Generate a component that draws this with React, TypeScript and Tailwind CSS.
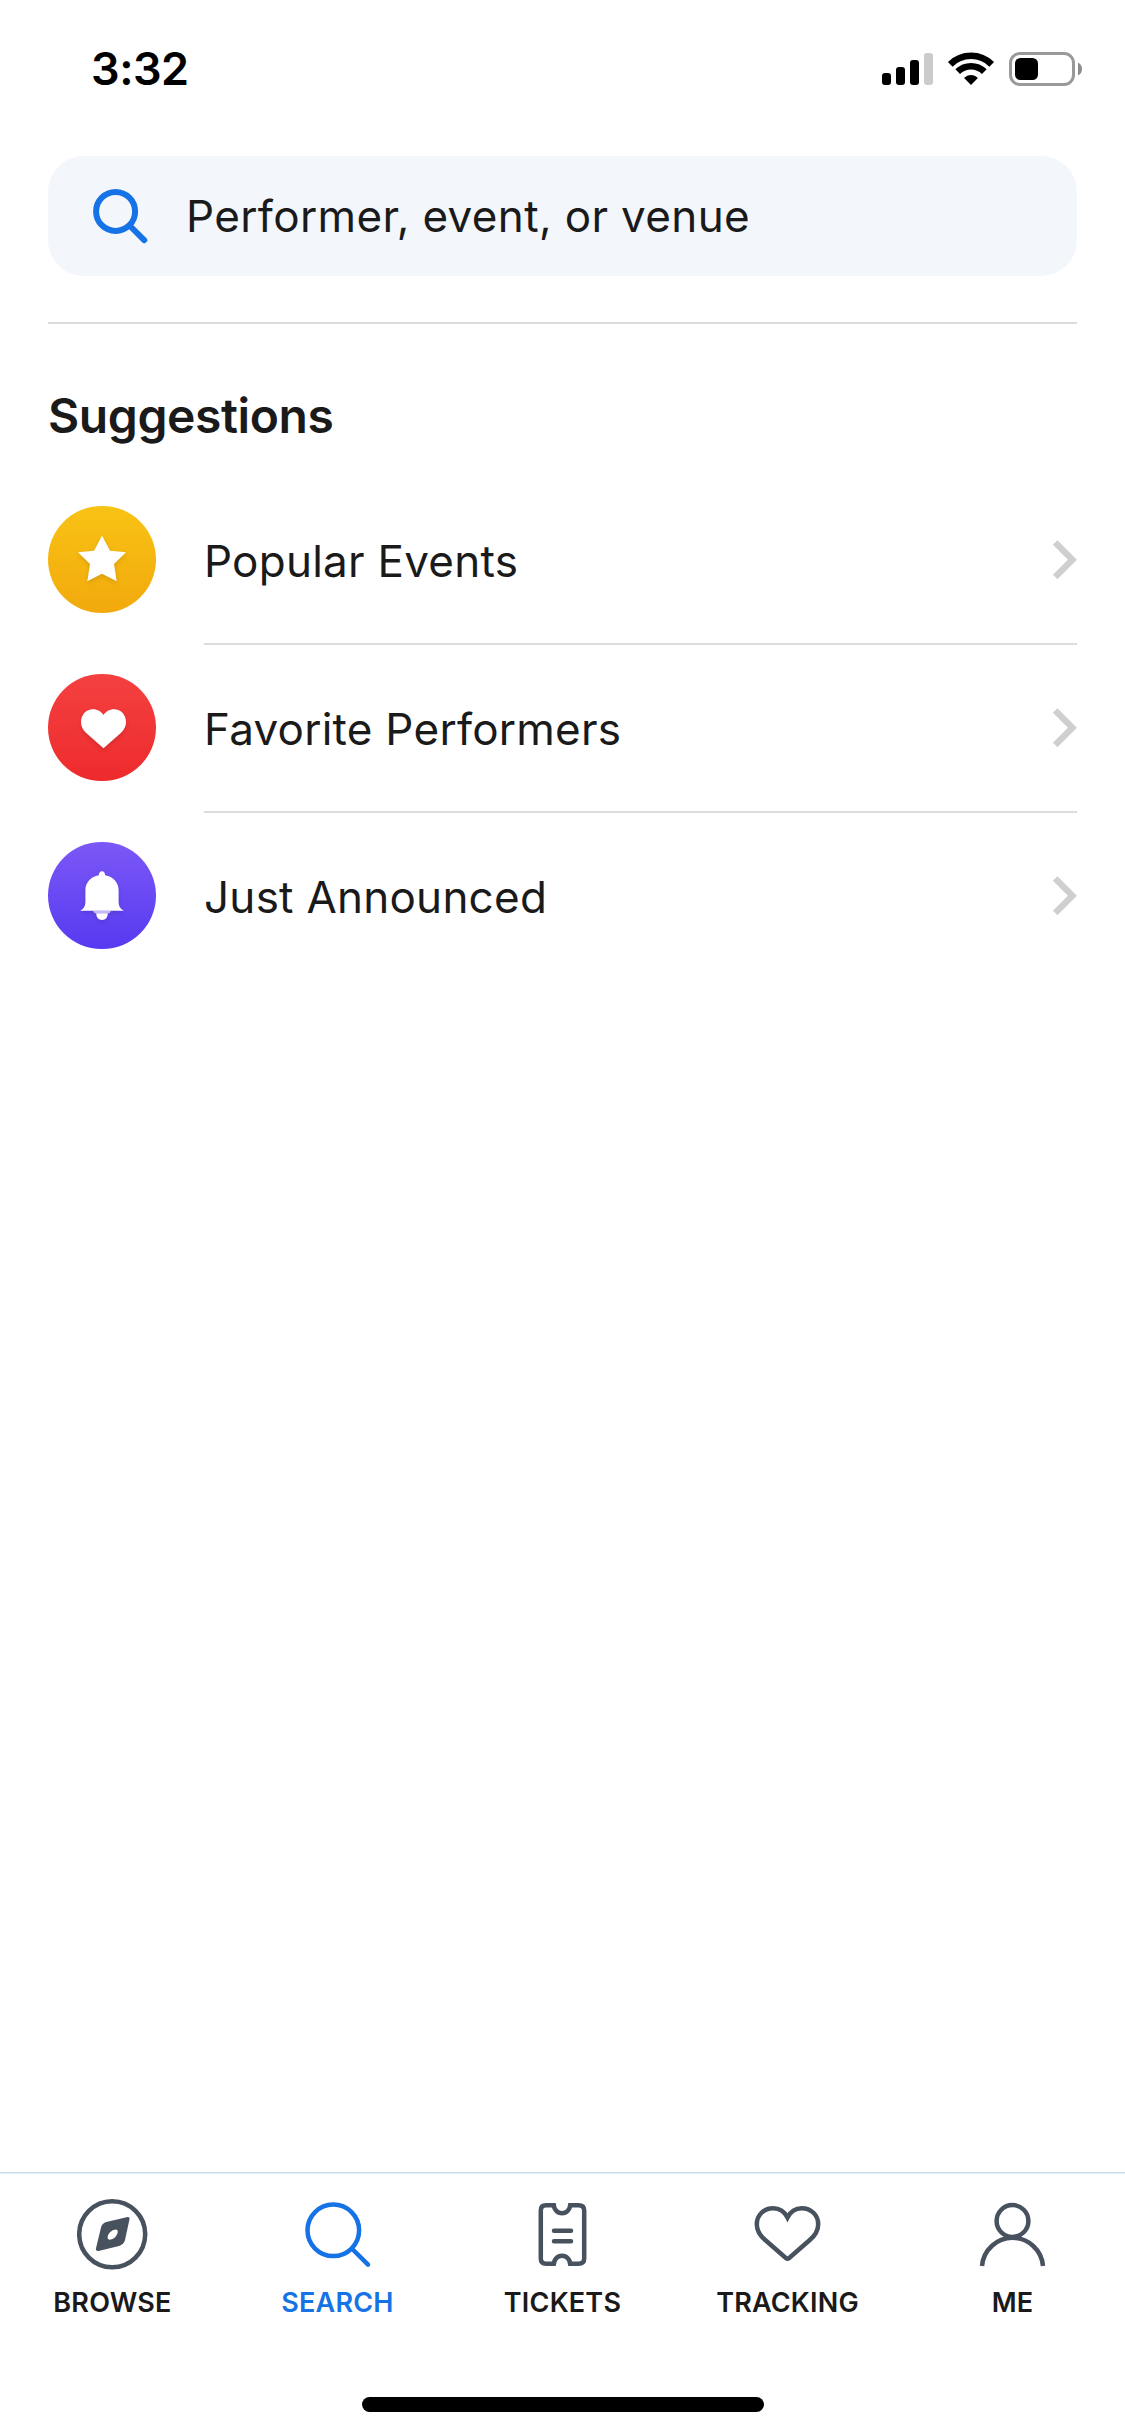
import type { ReactNode } from "react";

function StatusBar() {
  return (
    <header className="flex h-[156px] items-start justify-between pl-[91px] pr-[43px]">
      <span className="pt-[42px] text-[45px] font-semibold leading-[54px] tracking-[-0.5px] text-black">3:32</span>
      <svg className="mt-[52px] h-[34px] w-[201px]" viewBox="0 0 201 34">
        <rect x="1" y="21" width="9" height="12" rx="3" />
        <rect x="15" y="15" width="9" height="18" rx="3" />
        <rect x="29" y="8" width="9" height="25" rx="3" />
        <rect x="43" y="1" width="9" height="32" rx="3" fill="#cbcbcb" />
        <path d="M69.3 12.3A29.3 29.3 0 0 1 110.7 12.3" fill="none" stroke="#000" strokeWidth="6.6" />
        <path d="M76.7 19.7A18.8 18.8 0 0 1 103.3 19.7" fill="none" stroke="#000" strokeWidth="6.6" />
        <path d="M90 33L83.6 26.6Q83 25.8 83.8 25.2Q90 20.8 96.2 25.2Q97 25.8 96.4 26.6Z" />
        <rect x="129.5" y="1.5" width="63" height="31" rx="9.5" fill="none" stroke="#999" strokeWidth="3" />
        <rect x="134" y="6" width="23" height="22" rx="5.5" />
        <path d="M197 10.5Q201 12.5 201 17T197 23.5Z" fill="#8c8c8c" />
      </svg>
    </header>
  );
}

function Chevron() {
  return (
    <svg className="h-[40px] w-[25px]" viewBox="0 0 25 40" fill="none" stroke="#cfcfcf" strokeWidth="6.4">
      <path d="M3.2 2.4L20.4 19.7L3.2 37" />
    </svg>
  );
}

const suggestions: { label: string; disc: string; icon: ReactNode }[] = [
  {
    label: "Popular Events",
    disc: "bg-linear-to-b from-[#f8c314] to-[#f2a90d]",
    icon: <path d="M54 29.7L62 44.7L78 46.3L66 58L68.7 75.3L54 67.7L39.3 75.3L42 58L30 46.3L46 44.7Z" />,
  },
  {
    label: "Favorite Performers",
    disc: "bg-linear-to-b from-[#f44040] to-[#ee2a2c]",
    icon: <path d="M55.5 74.3L38.2 59C34.7 55.6 33 52.3 33 48C33 40.6 38.3 35.2 45 35.2C49.6 35.2 53.4 37.4 55.5 41C57.6 37.4 61.4 35.2 66 35.2C72.7 35.2 78 40.6 78 48C78 52.3 76.3 55.6 72.8 59Z" />,
  },
  {
    label: "Just Announced",
    disc: "bg-linear-to-b from-[#7c57f7] to-[#5839f0]",
    icon: (
      <>
        <path d="M54 29.2C56.2 29.2 57 31 57.2 33.2C65 34.5 70.6 40.5 70.6 48V60C70.6 64 72.2 67 76 68.7H32C35.8 67 37.4 64 37.4 60V48C37.4 40.5 43 34.5 50.8 33.2C51 31 51.8 29.2 54 29.2Z" />
        <path d="M45 68.7H63L61.5 71.3H46.5Z" opacity="0.65" />
        <path d="M48.2 71.3H59.8C59.8 75.5 57.5 78 54 78S48.2 75.5 48.2 71.3Z" />
      </>
    ),
  },
];

const tabs: { label: string; active?: boolean; icon: ReactNode }[] = [
  {
    label: "BROWSE",
    icon: (
      <>
        <circle cx="35.2" cy="36.2" r="33" />
        <path
          d="M29.3 24L50.6 19.1Q53 18.8 52.5 21.2L48 42Q46.8 46.6 42 48L21.6 53Q18.4 53.4 19 50.3L24 29.6Q25.2 25 29.3 24ZM38.8 31.5Q35.5 31.8 33 34.3Q30.5 36.8 30.5 39.8Q30.8 41.8 32.8 41.8Q35.8 41.6 38.2 39.2Q40.8 36.5 40.8 33.5Q40.8 31.5 38.8 31.5Z"
          fill="currentColor"
          fillRule="evenodd"
          stroke="none"
        />
      </>
    ),
  },
  {
    label: "SEARCH",
    active: true,
    icon: (
      <>
        <circle cx="31.3" cy="32.3" r="25.8" />
        <path d="M50.3 51L66 66.7" strokeLinecap="round" />
      </>
    ),
  },
  {
    label: "TICKETS",
    icon: (
      <>
        <path d="M28.3 7.3H19Q13.8 7.3 13.8 12.5V60.5Q13.8 65.7 19 65.7H28.3M41.7 65.7H51.5Q57.2 65.7 57.2 60.5V12.5Q57.2 7.3 51.5 7.3H41.7" />
        <path d="M26.6 5.2C26.6 18.6 43.4 18.6 43.4 5.2M26.6 67.8C26.6 54.4 43.4 54.4 43.4 67.8" />
        <path d="M27 32.7H44M27 43.2H44" strokeLinecap="round" />
      </>
    ),
  },
  {
    label: "TRACKING",
    icon: (
      <path d="M35.5 19.5C32.5 13.5 27.5 10.2 21.2 10.2C12 10.2 4.8 17 4.8 26.2C4.8 32.5 7.8 37.5 13.5 42.3L33.8 60Q35.5 61.3 37.2 60L57.5 42.3C63.2 37.5 66.2 32.5 66.2 26.2C66.2 17 59 10.2 49.8 10.2C43.5 10.2 38.5 13.5 35.5 19.5Z" />
    ),
  },
  {
    label: "ME",
    icon: (
      <>
        <circle cx="35.5" cy="23" r="15.9" />
        <path d="M5 68A30.6 30.6 0 0 1 66 68" />
      </>
    ),
  },
];

export default function App() {
  return (
    <div className="flex h-[2436px] w-[1125px] flex-col bg-white font-['Inter',sans-serif] text-[#1a1a1a]">
      <StatusBar />
      <main className="flex-1 px-[48px]">
        <div className="flex h-[120px] items-center rounded-[36px] bg-[#f3f6fb] pl-[44px]">
          <svg className="h-[56px] w-[56px]" viewBox="0 0 56 56" fill="none" stroke="#1673e6" strokeWidth="6">
            <circle cx="23.6" cy="23.4" r="19.5" />
            <path d="M37.5 37.5L52.2 52.2" strokeLinecap="round" />
          </svg>
          <span className="pl-[38px] text-[44px] leading-[54px] tracking-[0.36px]">Performer, event, or venue</span>
        </div>
        <div className="mt-[46px] h-[2px] bg-[#dcdcdc]" />
        <h1 className="mt-[62px] text-[48px] font-semibold leading-[60px] tracking-[-0.4px]">Suggestions</h1>
        <ul className="mt-[31px]">
          {suggestions.map((s, i) => (
            <li key={s.label} className="flex h-[168px]">
              <div className={`mt-[29px] h-[107px] w-[108px] rounded-full ${s.disc}`}>
                <svg className="h-[108px] w-[108px] drop-shadow-[0_2px_2px_rgba(0,0,0,0.12)]" viewBox="0 0 108 108" fill="#fff">
                  {s.icon}
                </svg>
              </div>
              <div
                className={`ml-[48px] flex flex-1 items-center justify-between border-b-2 ${
                  i < suggestions.length - 1 ? "border-[#dcdcdc]" : "border-transparent"
                }`}
              >
                <span className="pt-[2px] text-[44px] leading-[54px] tracking-[0.25px]">{s.label}</span>
                <Chevron />
              </div>
            </li>
          ))}
        </ul>
      </main>
      <nav className="flex h-[225px] border-t border-[#c9daec] shadow-[inset_0_1px_0_#e6eef6]">
        {tabs.map((t) => (
          <div key={t.label} className={`flex w-[225px] flex-col items-center pt-[25px] ${t.active ? "text-[#1673e6]" : ""}`}>
            <svg
              className={`h-[72px] w-[72px] ${t.active ? "" : "text-[#48525f]"}`}
              viewBox="0 0 72 72"
              fill="none"
              stroke="currentColor"
              strokeWidth="4.5"
            >
              {t.icon}
            </svg>
            <span className="mt-[16px] text-[27px] font-semibold leading-[34px] tracking-[0.2px]">{t.label}</span>
          </div>
        ))}
      </nav>
      <div className="mx-auto mb-[24px] h-[15px] w-[402px] rounded-full bg-black" />
    </div>
  );
}
